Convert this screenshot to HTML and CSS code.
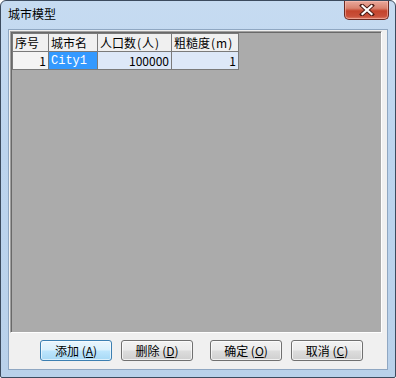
FILE: index.html
```html
<!DOCTYPE html>
<html lang="zh-CN">
<head>
  <meta charset="UTF-8">
  <title>城市模型</title>
  <link rel="stylesheet" href="styles.css">
</head>
<body>
  <div class="window">
    <div class="titlebar">
      <span class="title">城市模型</span>
      <div class="close-btn">
        <svg width="16" height="12" viewBox="0 0 16 12">
          <path d="M3 1.5 L13 10.5 M13 1.5 L3 10.5" stroke="#4a1a14" stroke-width="4" stroke-linecap="square"/>
          <path d="M3.5 2 L12.5 10 M12.5 2 L3.5 10" stroke="#ffffff" stroke-width="2.2" stroke-linecap="square"/>
        </svg>
      </div>
    </div>

    <div class="client">
      <div class="grid-box">
        <table class="grid">
          <tr class="head">
            <td class="c1">序号</td>
            <td class="c2">城市名</td>
            <td class="c3">人口数<span class="paren">(</span>人<span class="paren">)</span></td>
            <td class="c4">粗糙度<span class="paren">(</span>m<span class="paren">)</span></td>
          </tr>
          <tr class="row">
            <td class="num">1</td>
            <td class="selected">City1</td>
            <td class="val">100000</td>
            <td class="val">1</td>
          </tr>
        </table>
      </div>

      <div class="buttons">
        <button class="btn default">添加 (<u>A</u>)</button>
        <button class="btn">删除 (<u>D</u>)</button>
        <button class="btn spaced">确定 (<u>O</u>)</button>
        <button class="btn">取消 (<u>C</u>)</button>
      </div>
    </div>
  </div>
</body>
</html>
```

FILE: styles.css
```css
* {
  margin: 0;
  padding: 0;
  box-sizing: border-box;
}

body {
  width: 396px;
  height: 378px;
  background: #ffffff;
  font-family: "Noto Sans CJK SC", "Noto Sans", sans-serif;
  font-size: 12px;
  color: #000;
  overflow: hidden;
}

.window {
  width: 396px;
  height: 378px;
  border: 1px solid #3c4b5e;
  border-radius: 6px 6px 2px 2px;
  background: linear-gradient(180deg, #c6dbf1 0%, #bcd4ee 40%, #b9d1ea 100%);
  display: flex;
  flex-direction: column;
  padding: 0 7px 7px 7px;
}

.titlebar {
  height: 28px;
  display: flex;
  align-items: flex-start;
  justify-content: space-between;
}

.title {
  margin-top: 5px;
  font-size: 12px;
  line-height: 16px;
  color: #000;
}

.close-btn {
  width: 45px;
  height: 19px;
  margin-right: -1px;
  border: 1px solid #6b2a22;
  border-top: none;
  border-radius: 0 0 5px 5px;
  background: linear-gradient(180deg, #e9a99c 0%, #d9826f 40%, #c4442c 55%, #c9503a 85%, #de806a 100%);
  display: flex;
  align-items: center;
  justify-content: center;
  box-shadow: inset 0 0 0 1px rgba(255, 200, 190, 0.5);
}

.client {
  flex: 1;
  background: #f0f0f0;
  border: 1px solid #8fa7c2;
  padding: 1px 5px 0 1px;
  display: flex;
  flex-direction: column;
}

.grid-box {
  height: 302px;
  background: #ababab;
  border-top: 1px solid #a0a0a0;
  border-left: 1px solid #a0a0a0;
  border-right: 1px solid #ffffff;
  border-bottom: 1px solid #ffffff;
  box-shadow: inset 1px 1px 0 #696969;
  padding: 1px 0 0 1px;
}

.grid {
  border-collapse: collapse;
  font-size: 12px;
}

.grid td {
  height: 18px;
  padding: 0 2px;
  border: 1px solid #7a7a7a;
  line-height: 16px;
  white-space: nowrap;
}

.head td {
  background: #f0f0f0;
}

.paren {
  margin: 0 1px;
}

.c1 { width: 36px; }
.c2 { width: 49px; }
.c3 { width: 74px; }
.c4 { width: 67px; }

.row td {
  background: #dde8f8;
  text-align: right;
}

.row .num {
  background: #f4f4f4;
}

.row .selected {
  background: #3399ff;
  color: #ffffff;
  text-align: left;
  font-family: "Liberation Mono", "DejaVu Sans Mono", monospace;
  font-size: 12px;
}

.buttons {
  display: flex;
  gap: 9px;
  padding-left: 30px;
  margin-top: 7px;
}

.btn {
  width: 72px;
  height: 21px;
  border: 1px solid #707070;
  border-radius: 3px;
  background: linear-gradient(180deg, #f2f2f2 0%, #ebebeb 49%, #dddddd 51%, #cfcfcf 100%);
  box-shadow: inset 0 0 0 1px rgba(255, 255, 255, 0.7);
  font-family: "Noto Sans CJK SC", "Noto Sans", sans-serif;
  font-size: 12px;
  color: #000;
  line-height: 17px;
}

.btn u {
  text-decoration: underline;
}

.btn.default {
  border-color: #3c7fb1;
  background: linear-gradient(180deg, #eaf6fd 0%, #d9f0fc 49%, #bee6fd 51%, #a7d9f5 100%);
  box-shadow: inset 0 0 0 1px rgba(255, 255, 255, 0.6);
}

.btn.spaced {
  margin-left: 8px;
}
```
